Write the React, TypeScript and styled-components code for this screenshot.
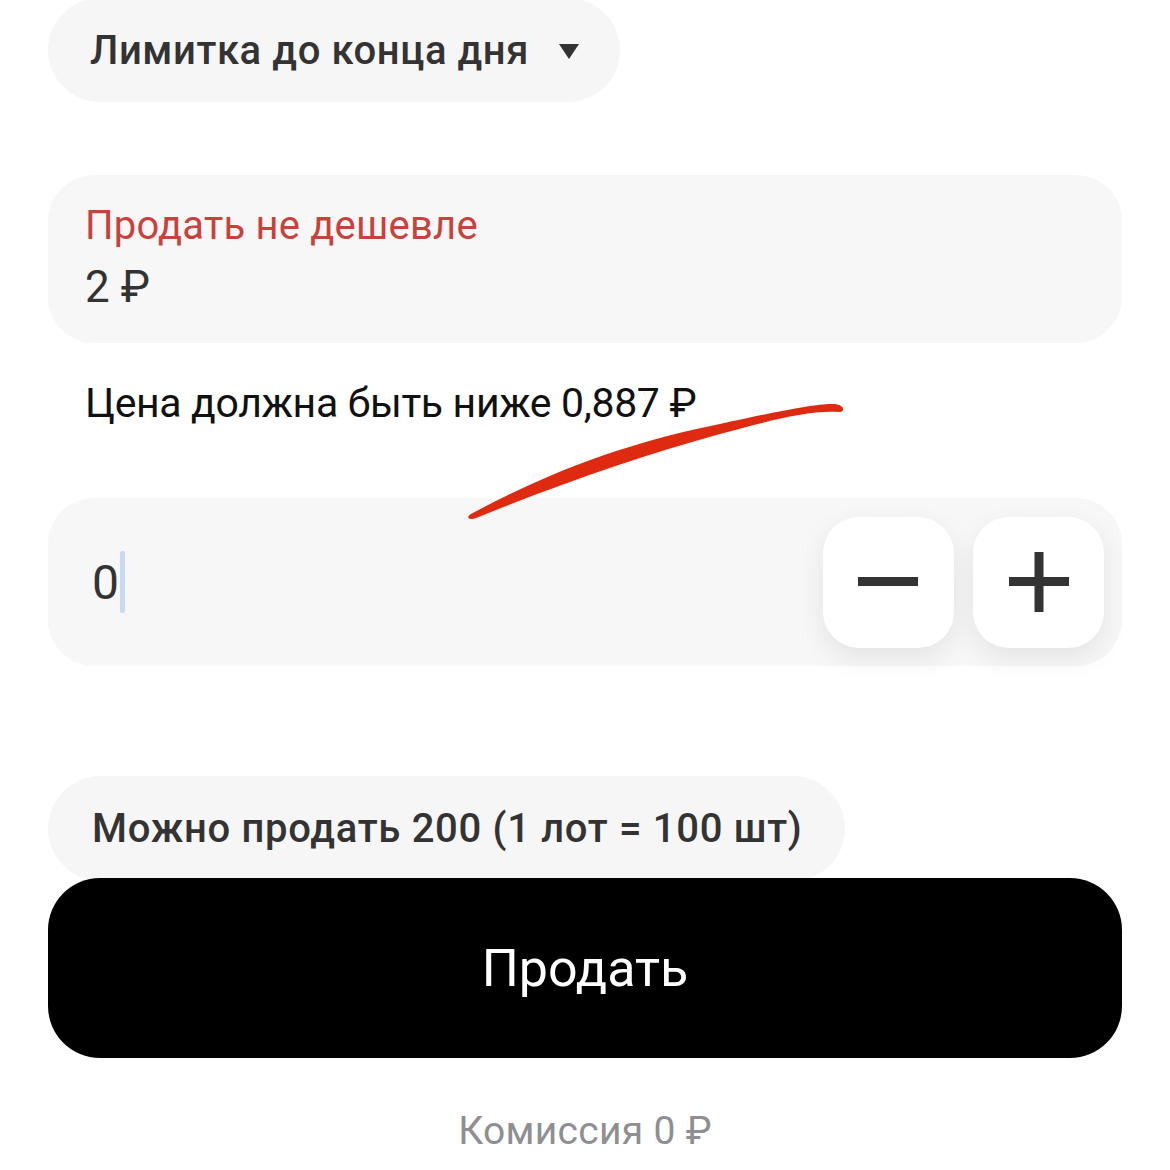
import React from "react";
import styled, { createGlobalStyle } from "styled-components";

const Global = createGlobalStyle`
  html, body { margin: 0; padding: 0; background: #ffffff; }
  body { font-family: Roboto, "Noto Sans", "Liberation Sans", sans-serif; }
`;

const Page = styled.div`
  position: relative;
  width: 1170px;
  height: 1170px;
  overflow: hidden;
  padding: 0 48px;
  box-sizing: border-box;
  display: flex;
  flex-direction: column;
`;

const Pill = styled.div<{ $w: number; $h: number; $ls: number }>`
  width: ${(p) => p.$w}px;
  height: ${(p) => p.$h}px;
  box-sizing: border-box;
  border-radius: ${(p) => p.$h / 2}px;
  background: #f6f6f6;
  display: flex;
  align-items: center;
  padding-left: 42px;
  font-size: 40px;
  font-weight: 500;
  color: #333333;
  letter-spacing: ${(p) => p.$ls}px;
`;

const TopPill = styled(Pill)`
  margin-top: -2px;
  gap: 30px;
`;

const Caret = styled.span`
  width: 0;
  height: 0;
  border-left: 10px solid transparent;
  border-right: 10px solid transparent;
  border-top: 15px solid #333333;
  margin-top: 2px;
`;

const Field = styled.div<{ $top: number }>`
  margin-top: ${(p) => p.$top}px;
  height: 168px;
  box-sizing: border-box;
  border-radius: 46px;
  background: #f7f7f8;
  display: flex;
`;

const PriceField = styled(Field)`
  flex-direction: column;
  padding: 28px 37px 24px;
`;

const Label = styled.div`
  font-size: 40px;
  color: #c9413b;
  line-height: 46px;
  letter-spacing: 0.2px;
`;

const Value = styled.div`
  font-size: 44px;
  color: #333333;
  line-height: 52px;
  margin-top: 12px;
`;

const ErrorText = styled.div`
  margin-top: 36px;
  padding-left: 37px;
  font-size: 41px;
  line-height: 48px;
  color: #111111;
  letter-spacing: -0.35px;
`;

const QtyField = styled(Field)`
  align-items: center;
  padding: 0 18px 0 44px;
`;

const QtyValue = styled.div`
  flex: 1;
  display: flex;
  align-items: center;
  font-size: 48px;
  font-weight: 400;
  color: #333333;
`;

const Cursor = styled.span`
  width: 5px;
  height: 62px;
  border-radius: 2px;
  background: #c9d9f0;
  margin-left: 1px;
`;

const StepButtons = styled.div`
  display: flex;
  gap: 19px;
`;

const Step = styled.div`
  width: 131px;
  height: 131px;
  border-radius: 36px;
  background: #ffffff;
  box-shadow: 0 10px 28px rgba(0, 0, 0, 0.08);
  display: flex;
  align-items: center;
  justify-content: center;
`;

const InfoPill = styled(Pill)`
  margin-top: 110px;
  padding-left: 44px;
`;

const SellButton = styled.button`
  margin-top: -3px;
  height: 180px;
  border: none;
  border-radius: 52px;
  background: #000000;
  color: #ffffff;
  font-family: Roboto, "Noto Sans", sans-serif;
  font-size: 52px;
  display: flex;
  align-items: center;
  justify-content: center;
`;

const Commission = styled.div`
  margin-top: 50px;
  text-align: center;
  font-size: 39px;
  color: #8e8e93;
  letter-spacing: 0.3px;
`;

const Stroke = styled.svg`
  position: absolute;
  left: 0;
  top: 0;
  pointer-events: none;
`;

export default function App() {
  return (
    <>
      <Global />
      <Page>
        <TopPill $w={572} $h={104} $ls={0.6}>
          Лимитка до конца дня
          <Caret />
        </TopPill>
        <PriceField $top={73}>
          <Label>Продать не дешевле</Label>
          <Value>2 ₽</Value>
        </PriceField>
        <ErrorText>Цена должна быть ниже 0,887 ₽</ErrorText>
        <QtyField $top={71}>
          <QtyValue>
            0<Cursor />
          </QtyValue>
          <StepButtons>
            <Step>
              <svg width="62" height="62" viewBox="0 0 62 62">
                <rect x="0" y="26" width="60" height="9" fill="#333333" />
              </svg>
            </Step>
            <Step>
              <svg width="62" height="62" viewBox="0 0 62 62">
                <rect x="1" y="26" width="60" height="9" fill="#333333" />
                <rect x="26.5" y="1" width="9" height="60" fill="#333333" />
              </svg>
            </Step>
          </StepButtons>
        </QtyField>
        <InfoPill $w={797} $h={105} $ls={0.7}>
          Можно продать 200 (1 лот = 100 шт)
        </InfoPill>
        <SellButton>Продать</SellButton>
        <Commission>Комиссия 0 ₽</Commission>
        <Stroke width="1170" height="1170" viewBox="0 0 1170 1170">
          <path
            d="M471 514 C 560 466, 640 440, 720 424 C 780 411, 818 403, 834 404 C 846 405, 845 413, 838 412 C 808 410, 760 423, 720 434 C 640 456, 560 484, 476 518 C 468 521, 466 517, 471 514 Z"
            fill="#dd2a10"
          />
        </Stroke>
      </Page>
    </>
  );
}
